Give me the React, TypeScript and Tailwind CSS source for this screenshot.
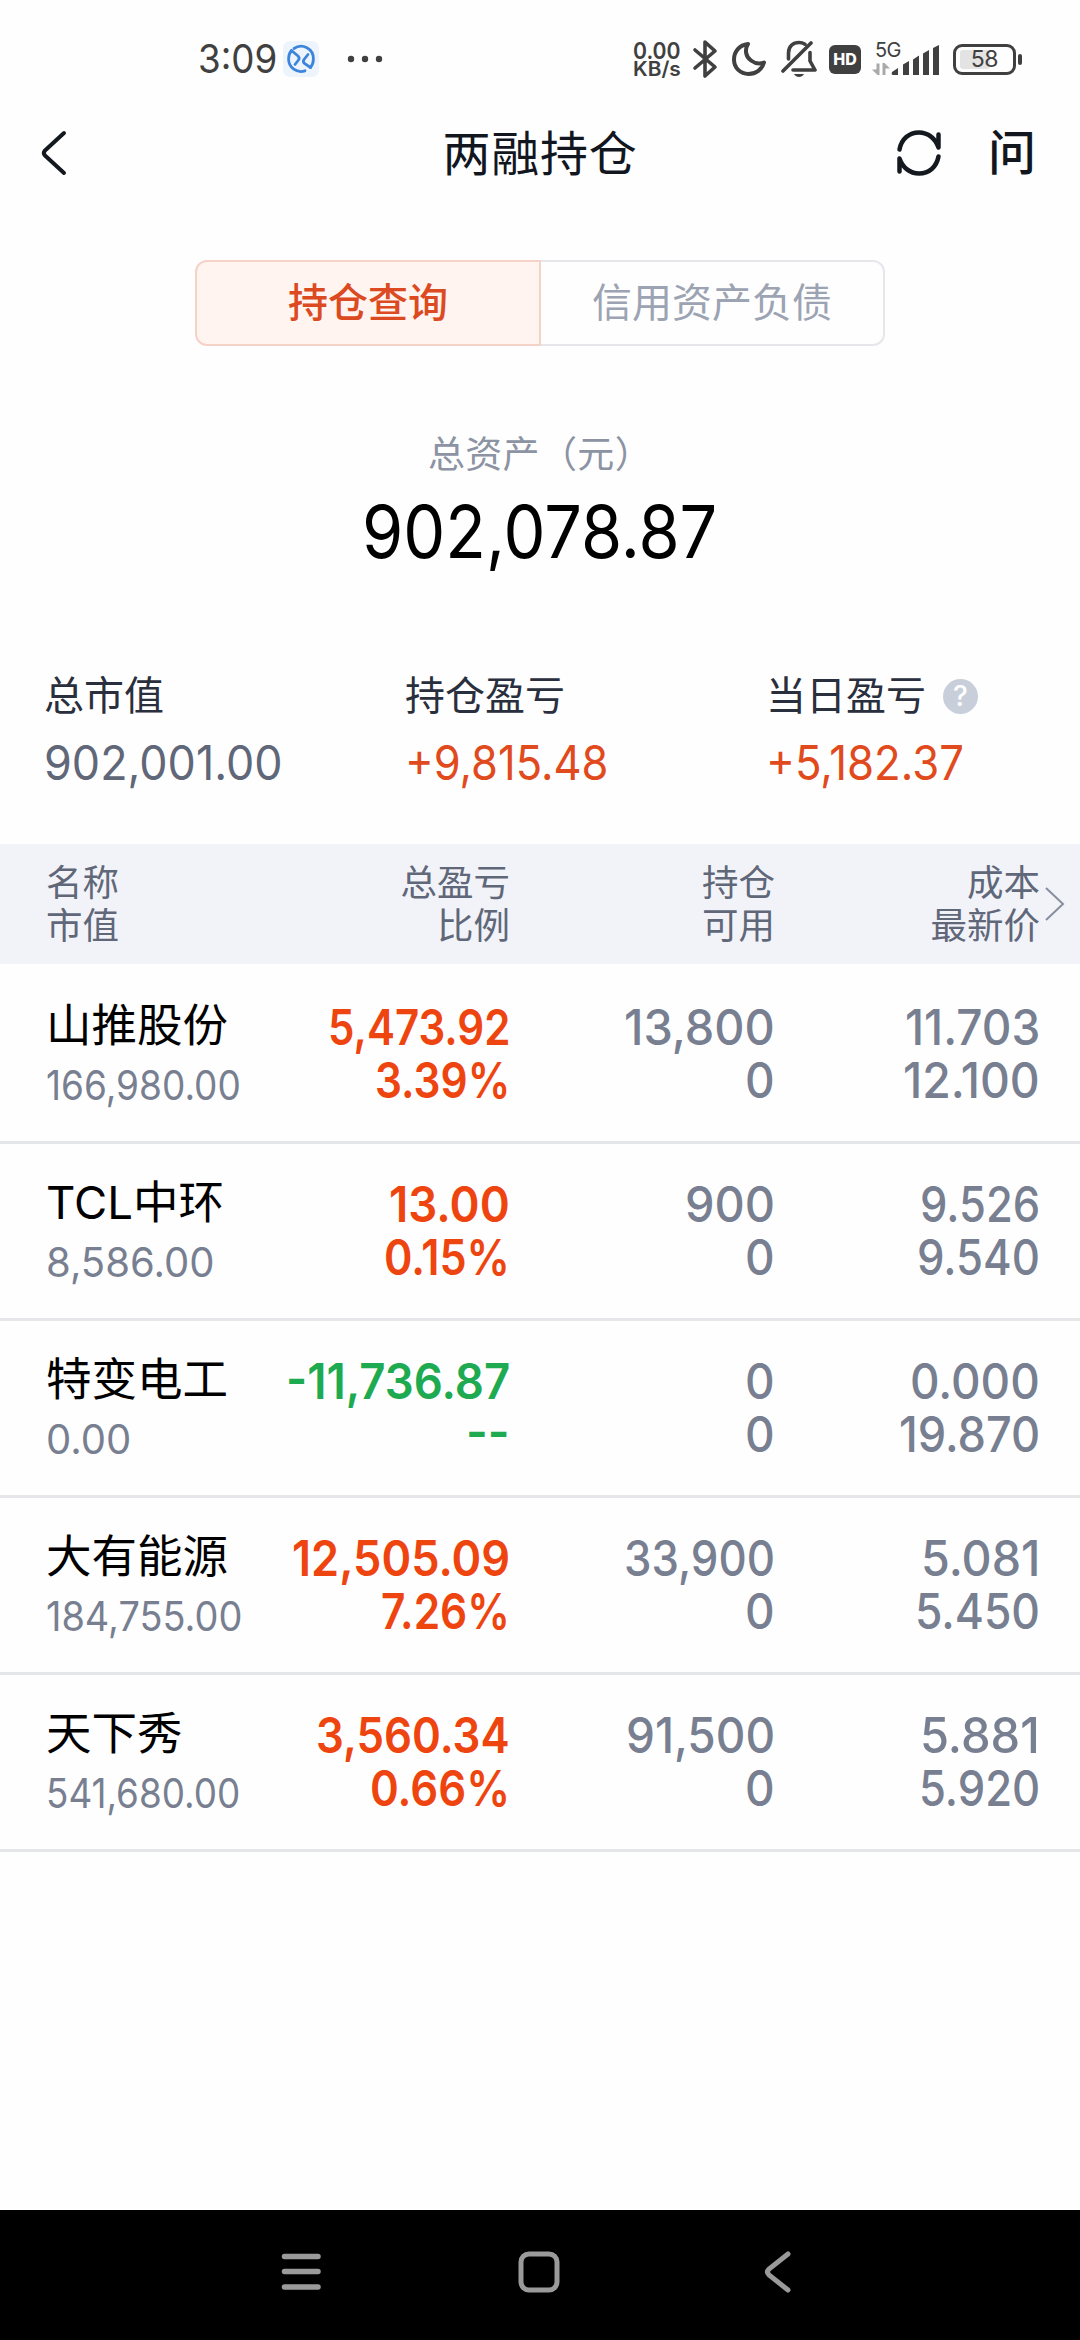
import React, { useLayoutEffect, useRef, useState } from "react";

type Tone = "up" | "down";
// A figure's text and the width, in pixels, that it fills.
type Amount = [text: string, width: number];

interface Holding {
  name: string;
  value: Amount;
  profit: Amount;
  ratio: Amount;
  held: Amount;
  available: Amount;
  cost: Amount;
  price: Amount;
  tone: Tone;
}

const holdings: Holding[] = [
  { name: "山推股份", value: ["166,980.00", 195], profit: ["5,473.92", 182], ratio: ["3.39%", 135], held: ["13,800", 151], available: ["0", 30], cost: ["11.703", 135], price: ["12.100", 137], tone: "up" },
  { name: "TCL中环", value: ["8,586.00", 169], profit: ["13.00", 121], ratio: ["0.15%", 126], held: ["900", 90], available: ["0", 30], cost: ["9.526", 120], price: ["9.540", 123], tone: "up" },
  { name: "特变电工", value: ["0.00", 85], profit: ["-11,736.87", 224], ratio: ["--", 44], held: ["0", 30], available: ["0", 30], cost: ["0.000", 130], price: ["19.870", 141], tone: "down" },
  { name: "大有能源", value: ["184,755.00", 196], profit: ["12,505.09", 218], ratio: ["7.26%", 129], held: ["33,900", 151], available: ["0", 30], cost: ["5.081", 119], price: ["5.450", 125], tone: "up" },
  { name: "天下秀", value: ["541,680.00", 194], profit: ["3,560.34", 194], ratio: ["0.66%", 140], held: ["91,500", 149], available: ["0", 30], cost: ["5.881", 120], price: ["5.920", 121], tone: "up" },
];

function Figure({ amount, align = "right" }: { amount: Amount; align?: "left" | "right" | "center" }) {
  const [text, width] = amount;
  const ref = useRef<HTMLSpanElement>(null);
  const [scale, setScale] = useState(1);
  useLayoutEffect(() => {
    if (ref.current) setScale(width / ref.current.offsetWidth);
  }, [text, width]);
  const origin = align === "left" ? "origin-left" : align === "right" ? "origin-right" : "origin-center";
  return (
    <div className="whitespace-nowrap">
      <span ref={ref} className={`inline-block align-top ${origin}`} style={{ transform: `scaleX(${scale})` }}>
        {text}
      </span>
    </div>
  );
}

function StatusBar() {
  return (
    <div className="flex h-[118px] items-center pl-[198px] pr-[58px] text-[#404040]">
      <div className="w-[85px] text-[40px] leading-none">
        <Figure amount={["3:09", 79]} align="left" />
      </div>
      <svg className="h-9 w-9 shrink-0" viewBox="0 0 36 36" fill="none">
        <rect width="36" height="36" rx="7" fill="#EEF4FB" />
        <g stroke="#3D85DC" strokeWidth="2.800" strokeLinecap="round">
          <path d="M11 7.500A12.400 12.400 0 0 1 30.400 18Q30.400 23 27.500 26.500" />
          <path d="M22 29.800A12.400 12.400 0 0 1 5.600 18Q5.600 13 8.500 9.500" />
          <path d="M8.500 9.500l6.500 5.500q2 2 .5 4l-3.500 4.500" />
          <path d="M27.500 26.500l-6-4q-2-2-.5-4l4-5" />
        </g>
      </svg>
      <svg className="ml-7 h-2 w-[36px] shrink-0" viewBox="0 0 36 8" fill="#404040">
        <circle cx="4" cy="4" r="3.200" />
        <circle cx="18" cy="4" r="3.200" />
        <circle cx="32" cy="4" r="3.200" />
      </svg>
      <div className="ml-auto flex items-center">
        <div className="flex w-[59px] flex-col pt-0.5 text-[23px] font-semibold leading-[18px]">
          <Figure amount={["0.00", 48]} align="left" />
          <div className="text-[20px]">
            <Figure amount={["KB/s", 48]} align="left" />
          </div>
        </div>
        <svg className="h-10 w-[26px]" viewBox="0 0 26 40" fill="none" stroke="#404040" strokeWidth="3.600" strokeLinejoin="round" strokeLinecap="round">
          <path d="M3 11l20 17-10 9V3l10 9L3 29" />
        </svg>
        <svg className="ml-[13px] h-9 w-9" viewBox="0 0 36 36" fill="none" stroke="#404040" strokeWidth="4" strokeLinejoin="round">
          <path d="M17 3C8.500 4 3 10.500 3 18.500C3 27 9.500 33 17.500 33C25 33 31 28.500 33 21.500C29 23 24 22.500 20 19.500C14.500 15.500 13.500 8.500 17 3z" />
        </svg>
        <svg className="ml-[14px] h-[38px] w-9" viewBox="0 0 36 38" fill="none" stroke="#404040" strokeWidth="3.600" strokeLinecap="round">
          <path d="M2 31L30 3" />
          <path d="M7.500 19V13C7.500 6.500 12 2.500 18 2.500C20.500 2.500 22 3 24 4.200M29 12.500V21L34 30H12" strokeLinejoin="round" />
          <path d="M13 34h10c-2 4-8 4-10 0z" fill="#404040" stroke="none" />
        </svg>
        <span className="ml-[12px] flex h-[29px] w-[32px] items-center justify-center rounded-[6px] bg-[#404040] text-[16px] font-extrabold leading-none text-white">HD</span>
        <div className="ml-[11px] flex h-[34px] w-[68px] items-end">
          <div className="flex w-[18px] flex-col">
            <span className="w-[26px] pl-[3px] text-[20px] leading-[16px] tracking-[-0.03em]">5G</span>
            <svg className="mt-1 h-[14px] w-[18px]" viewBox="0 0 18 14" fill="#A9A9A9">
              <path d="M4.500 1.500h3V13H5.500L0 7.500h4.500zM10.500 13h3V6.500H18L12.500 1h-2z" />
            </svg>
          </div>
          <svg className="h-[32px] w-[49px]" viewBox="0 0 49 32" fill="#404040">
            <path d="M2 28L8 24V31H3Q1 31 2 28zM13 20.500L19 17V31H13zM23 15.500L29 11.500V31H23zM33 9.500L39 6V31H33zM43 4L49 1V31H43z" />
          </svg>
        </div>
        <div className="ml-[13px] flex items-center gap-0.5">
          <div className="relative flex h-[31px] w-[63px] items-center justify-center rounded-[9px] border-[3px] border-[#404040]">
            <span className="absolute left-1 top-[3px] h-[19px] w-[30px] rounded-[3px] bg-[#e3e3e3]" />
            <span className="relative text-[23px] leading-none tracking-[-0.02em]">58</span>
          </div>
          <span className="h-[11px] w-1 rounded-sm bg-[#404040]" />
        </div>
      </div>
    </div>
  );
}

function TitleBar() {
  return (
    <div className="grid h-[70px] grid-cols-[1fr_auto_1fr] items-center px-[38px] text-[#12161f]">
      <svg className="h-[48px] w-[32px]" viewBox="0 0 32 48" fill="none" stroke="#14181f" strokeWidth="4" strokeLinecap="round" strokeLinejoin="round">
        <path d="M26 4L7 21.500Q4.500 24 7 26.500L26 44" />
      </svg>
      <h1 className="pt-0.5 text-[48px] font-normal leading-[68px] tracking-[0.015em]">两融持仓</h1>
      <div className="flex items-center justify-end gap-[46px] pr-[6px]">
        <svg className="h-[48px] w-[46px]" viewBox="0 0 46 48" fill="none" stroke="#14181f" strokeWidth="4.500" strokeLinecap="round" strokeLinejoin="round">
          <path d="M3.500 20.500C5.500 10 13 3.500 23 3.500C32 3.500 39.500 9.500 42.500 18.500V5.500" />
          <path d="M42.500 27.500C40.500 38 33 44.500 23 44.500C14 44.500 6.500 38.500 3.500 29.500V42.500" />
        </svg>
        <span className="w-[48px] text-center text-[48px] font-medium leading-none">问</span>
      </div>
    </div>
  );
}

function Tabs() {
  return (
    <div className="mx-[195px] mt-[72px] flex h-[86px] text-[40px] leading-[82px]">
      <div className="w-[346px] rounded-l-[12px] border-2 border-[#f5d2c8] bg-[#fff4f0] text-center font-medium text-[#dc4a22]">持仓查询</div>
      <div className="flex-1 rounded-r-[12px] border-2 border-l-0 border-[#e5e7eb] text-center text-[#9ca3b3]">信用资产负债</div>
    </div>
  );
}

function Summary() {
  return (
    <>
      <div className="mt-[78px] flex flex-col items-center">
        <div className="h-[61px] whitespace-nowrap text-[37px] leading-[61px] tracking-[0.01em] text-[#8c93a3]">总资产（元）</div>
        <div className="h-[94px] text-[73px] leading-[94px] text-black">
          <Figure amount={["902,078.87", 355]} align="center" />
        </div>
      </div>
      <div className="mt-[92px] grid grid-cols-[361px_361px_1fr] pl-[44px] text-[40px]">
        <div>
          <div className="leading-[50px] text-[#2a2f3d]">总市值</div>
          <div className="mt-[17px] text-[47.500px] leading-[50px] text-[#5f6779]">
            <Figure amount={["902,001.00", 239]} align="left" />
          </div>
        </div>
        <div>
          <div className="leading-[50px] text-[#2a2f3d]">持仓盈亏</div>
          <div className="mt-[17px] text-[47.500px] leading-[50px] text-[#e04a1c]">
            <Figure amount={["+9,815.48", 203]} align="left" />
          </div>
        </div>
        <div>
          <div className="flex items-center leading-[50px] text-[#2a2f3d]">
            当日盈亏
            <span className="ml-[17px] flex h-[35px] w-[35px] items-center justify-center rounded-full bg-[#c9cfda] text-[28px] font-medium leading-none text-white">?</span>
          </div>
          <div className="mt-[17px] text-[47.500px] leading-[50px] text-[#e04a1c]">
            <Figure amount={["+5,182.37", 198]} align="left" />
          </div>
        </div>
      </div>
    </>
  );
}

function TableHead() {
  return (
    <div className="relative mt-[56px] grid h-[120px] grid-cols-[204px_260px_265px_265px] bg-[#f2f3f8] pl-[46px] pt-[17.500px] text-[36.500px] leading-[43px] text-[#5f6778]">
      <div>名称<br />市值</div>
      <div className="text-right">总盈亏<br />比例</div>
      <div className="text-right">持仓<br />可用</div>
      <div className="text-right">成本<br />最新价</div>
      <svg className="absolute right-[14px] top-[42px] h-[36px] w-[22px]" viewBox="0 0 22 36" fill="none" stroke="#878e9e" strokeWidth="2">
        <path d="M2 2L19 18L2 34" />
      </svg>
    </div>
  );
}

function HoldingRow({ item }: { item: Holding }) {
  const toneClass = item.tone === "up" ? "text-[#ee4510]" : "text-[#1eaa50]";
  return (
    <div className="grid h-[177px] grid-cols-[204px_260px_265px_265px] border-b-[3px] border-[#e4e6ea] pl-[46px] text-right text-[49px] font-medium leading-[53px] text-[#787f91]">
      <div className="pt-[28px] text-left font-normal">
        <div className="text-[45.500px] leading-[61px] text-black">{item.name}</div>
        <div className="text-[41px] leading-[59px]">
          <Figure amount={item.value} align="left" />
        </div>
      </div>
      <div className={`pt-[34px] font-semibold [font-feature-settings:'case'] ${toneClass}`}>
        <Figure amount={item.profit} />
        <Figure amount={item.ratio} />
      </div>
      <div className="pt-[34px]">
        <Figure amount={item.held} />
        <Figure amount={item.available} />
      </div>
      <div className="pt-[34px]">
        <Figure amount={item.cost} />
        <Figure amount={item.price} />
      </div>
    </div>
  );
}

function NavBar() {
  return (
    <div className="mt-auto flex h-[130px] items-center justify-between bg-black pb-[6px] pl-[280px] pr-[287px]">
      <svg className="h-[44px] w-[42px]" viewBox="0 0 42 44" stroke="#9a9a9a" strokeWidth="5.500" strokeLinecap="round">
        <path d="M4.500 6.500H38M4.500 21.500H38M4.500 37H38" />
      </svg>
      <svg className="-ml-[7px] h-[44px] w-[44px]" viewBox="0 0 44 44" fill="none" stroke="#9a9a9a" strokeWidth="5">
        <rect x="4" y="4" width="36" height="36" rx="8" />
      </svg>
      <svg className="h-[44px] w-[30px]" viewBox="0 0 30 44" fill="none" stroke="#9a9a9a" strokeWidth="5" strokeLinecap="round">
        <path d="M25 4L6 19Q3 22 6 25L25 40" />
      </svg>
    </div>
  );
}

export default function App() {
  return (
    <div className="flex h-[2340px] w-[1080px] flex-col overflow-hidden bg-[#fefefe] font-['Inter','Noto_Sans_CJK_SC',sans-serif]">
      <StatusBar />
      <TitleBar />
      <Tabs />
      <Summary />
      <TableHead />
      <div className="pt-[3px]">
        {holdings.map((item) => (
          <HoldingRow key={item.name} item={item} />
        ))}
      </div>
      <NavBar />
    </div>
  );
}
